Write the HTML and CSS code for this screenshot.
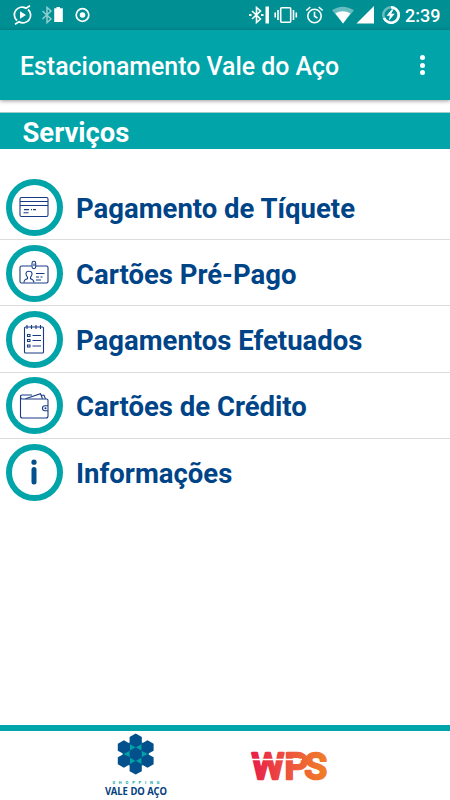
FILE: index.html
```html
<!DOCTYPE html>
<html lang="pt-br">
<head>
    <meta charset="UTF-8">
    <meta name="viewport" content="width=device-width, initial-scale=1.0">
    <title>Estacionamento Vale do Aço</title>
    <link rel="stylesheet" href="styles.css">
</head>
<body>
    <div class="status-bar">
        <svg class="status-icons" width="96" height="30" viewBox="0 0 96 30">
            <g fill="none" stroke="#fff" stroke-width="1.7">
                <path d="M17 20.500A7.600 7.600 0 0 1 26 8.300L30 5.800M28 9.500A7.600 7.600 0 0 1 19 21.700L15 24.200"/>
                <circle cx="82.500" cy="15" r="6.300"/>
            </g>
            <path d="M20 11.200v7.600l6-3.800z" fill="#fff"/>
            <path d="M42.500 11l8.500 8-4 3.500v-15l4 3.500-8.500 8" fill="none" stroke="#8fced0" stroke-width="1.500"/>
            <path d="M56.500 7h3.500v1.300h2.800v13.700h-8.600V8.300h2.300z" fill="#fff"/>
            <circle cx="82.500" cy="15" r="2.800" fill="#fff"/>
        </svg>
        <svg class="status-icons" width="158" height="30" viewBox="245 0 158 30">
            <g fill="none" stroke="#fff" stroke-width="1.6">
                <path d="M252 11l8.500 8-4 3.500v-15l4 3.500-8.500 8"/>
                <path d="M249 15h2.500M261 15h2.500" stroke-width="2"/>
                <rect x="280.700" y="7.800" width="10" height="14.400" rx="1"/>
                <path d="M278 10v10M293.500 10v10M275.200 12.500v5M296.300 12.500v5"/>
                <circle cx="314.500" cy="16" r="6.700"/>
                <path d="M314.500 11.700v4.500l3 2M306.300 10.500l4-3.500M322.700 10.500l-4-3.500"/>
            </g>
            <path d="M265.500 6.500h3.500v17h-3.500z" fill="#fff"/>
            <path d="M332 10.300Q342.500 3 354 10.300L343 23.500z" fill="#66bcbf"/>
            <path d="M335.300 13.300Q342.500 9 350.500 13.300L343 23.500z" fill="#fff"/>
            <path d="M356.500 23.500H374V6z" fill="#fff"/>
            <circle cx="391" cy="15" r="7.700" fill="none" stroke="#66bcbf" stroke-width="2.600"/>
            <path d="M391 7.300a7.700 7.700 0 1 1-7 10.700" fill="none" stroke="#fff" stroke-width="2.600"/>
            <path d="M392 9.300l-5.500 6.500h3.300l-1 5 6-7h-3.600l2.400-4.500z" fill="#fff"/>
        </svg>
        <span class="clock">2:39</span>
    </div>

    <header class="toolbar">
        <h1>Estacionamento Vale do Aço</h1>
        <div class="menu-dots">
            <span></span>
            <span></span>
            <span></span>
        </div>
    </header>

    <main>
        <h2>Serviços</h2>
        <ul class="services">
            <li>
                <span class="circle">
                    <svg class="icon" viewBox="0 0 32 32">
                        <rect x="2" y="6.500" width="28" height="19" rx="1.500"/>
                        <path d="M2 10.500h28M2 14.500h28M6 18.600h5M13 18.600h1M15 18.600h3M5.500 21.700h5"/>
                    </svg>
                </span>
                <span class="label">Pagamento de Tíquete</span>
            </li>
            <li>
                <span class="circle">
                    <svg class="icon" viewBox="0 0 32 32">
                        <path d="M13.500 9H3.500Q2 9 2 10.500v14Q2 26 3.500 26h25q1.500 0 1.500-1.500v-14Q30 9 28.500 9H18"/>
                        <rect x="14" y="4.300" width="3.700" height="7.400" rx="1.850"/>
                        <path d="M16 6.500v2.500"/>
                        <path d="M6 25.500q0-3 3.500-3.700v-1.500C7 17 7.500 14.300 11 14.300s4 2.700 1.500 6v1.500q3 .7 3.500 3.700"/>
                        <path d="M18 16.500h8.500M18 20h3M22.500 20h2M18 23h5"/>
                    </svg>
                </span>
                <span class="label">Cartões Pré-Pago</span>
            </li>
            <li>
                <span class="circle">
                    <svg class="icon" viewBox="0 0 32 32">
                        <rect x="6.500" y="4" width="19" height="26" rx="1"/>
                        <path d="M9 2v4M13.500 2v4M18 2v4M22.500 2v4M14.500 12.500h8.500M14.500 17.500h8.500M14.500 23h8.500"/>
                        <path d="M9.500 11.500h2.500v2h-2.500zM9.500 16.500h2.500v2h-2.500zM9.500 22h2.500v2h-2.500z"/>
                    </svg>
                </span>
                <span class="label">Pagamentos Efetuados</span>
            </li>
            <li>
                <span class="circle">
                    <svg class="icon" viewBox="0 0 32 32">
                        <path d="M2.500 5.500Q2.500 9 4 9h24.500q1.500 0 1.500 1.500v15.500q0 2-2 2H4.500q-2 0-2-2V6Q2.500 5 4 5h10"/>
                        <path d="M7.500 8.700l15-5 2 5M23 5.200h3l1.500 3.500M30 15.700h-3a2.500 2.500 0 0 0 0 5h3"/>
                        <circle cx="27.500" cy="18.200" r=".5"/>
                    </svg>
                </span>
                <span class="label">Cartões de Crédito</span>
            </li>
            <li>
                <span class="circle">
                    <svg class="icon" viewBox="0 0 32 32">
                        <circle class="solid" cx="16" cy="6.200" r="2.600"/>
                        <rect class="solid" x="13.500" y="11" width="5" height="17.500" rx="2.500"/>
                    </svg>
                </span>
                <span class="label">Informações</span>
            </li>
        </ul>
    </main>

    <footer class="logos">
        <svg width="70" height="69" viewBox="101 731 70 69">
            <path d="M129 742.500h13.500l6.700 11.500-6.700 11.500H129l-6.700-11.500z" fill="#00a4a8"/>
            <defs><path id="hex" d="M0-6.900l6.100 3.450v6.900L0 6.900l-6.100-3.450v-6.900z"/></defs>
            <g fill="#04508c">
                <use href="#hex" x="135.700" y="740.500"/>
                <use href="#hex" x="123.900" y="747.200"/>
                <use href="#hex" x="147.500" y="747.200"/>
                <use href="#hex" x="135.700" y="754.100"/>
                <use href="#hex" x="123.900" y="760.800"/>
                <use href="#hex" x="147.500" y="760.800"/>
                <use href="#hex" x="135.700" y="767.700"/>
            </g>
            <text class="logo-small" x="112.500" y="783.800" textLength="47">SHOPPING</text>
            <text class="logo-name" x="105" y="795" textLength="62" lengthAdjust="spacingAndGlyphs">VALE DO AÇO</text>
        </svg>
        <svg width="84" height="69" viewBox="248 731 84 69">
            <defs>
                <linearGradient id="warm" gradientUnits="userSpaceOnUse" x1="250" y1="0" x2="329" y2="0">
                    <stop offset="0" stop-color="#e71d4b"/>
                    <stop offset=".55" stop-color="#ee5a3b"/>
                    <stop offset="1" stop-color="#f08025"/>
                </linearGradient>
            </defs>
            <text class="logo-wps" x="251.500 284.500 304.500" y="779">WPS</text>
            <path d="M248 759.500h54" stroke="#fff" stroke-width="1.600"/>
        </svg>
    </footer>
</body>
</html>
```

FILE: styles.css
```css
* {
    margin: 0;
    padding: 0;
    box-sizing: border-box;
}
body {
    font-family: Roboto, "Liberation Sans", sans-serif;
    display: flex;
    flex-direction: column;
    height: 800px;
    background-color: #fff;
    overflow: hidden;
}

.status-bar {
    display: flex;
    align-items: center;
    height: 30px;
    background-color: #008f93;
    color: #fff;
}
.status-icons {
    flex: none;
}
.status-icons + .status-icons {
    margin-left: auto;
}
.clock {
    width: 47px;
    padding: 1px 0 0 2px;
    font-size: 18px;
    font-weight: 500;
    line-height: 30px;
}

.toolbar {
    display: flex;
    align-items: center;
    justify-content: space-between;
    height: 70px;
    padding: 2px 25px 0 20px;
    background-color: #00a4a9;
    box-shadow: 0 1px 4px rgba(0, 0, 0, 0.4);
    color: #fff;
}
.toolbar h1 {
    font-size: 24.9px;
    font-weight: 500;
    white-space: nowrap;
}
.menu-dots {
    display: flex;
    flex-direction: column;
    gap: 2.5px;
    padding-bottom: 2px;
}
.menu-dots span {
    width: 5px;
    height: 5px;
    border-radius: 50%;
    background-color: #fff;
}

main {
    flex: 1;
    padding-top: 12px;
}
h2 {
    height: 37px;
    padding-left: 22.5px;
    border-top: 1px solid #a5cccd;
    background-color: #00a4a9;
    color: #fff;
    font-size: 27.4px;
    font-weight: 700;
    line-height: 40px;
}

/* Lista de serviços */
.services {
    list-style: none;
    padding-top: 25px;
}
.services li {
    display: flex;
    align-items: center;
    gap: 13.5px;
    height: 66.2px;
    padding: 1px 0 0 5.5px;
    border-bottom: 1px solid #dcdcdc;
}
.services li:last-child {
    border-bottom: none;
}
.circle {
    display: flex;
    align-items: center;
    justify-content: center;
    width: 57px;
    height: 57px;
    border: 6px solid #00a4a9;
    border-radius: 50%;
}
.icon {
    width: 32px;
    height: 32px;
    fill: none;
    stroke: #173b83;
    stroke-width: 1.1;
}
.icon .solid {
    fill: #04508c;
    stroke: none;
}
.label {
    color: #004488;
    font-size: 27.5px;
    font-weight: 700;
    line-height: 32px;
    padding-top: 3px;
    white-space: nowrap;
}

.logos {
    display: flex;
    gap: 77px;
    height: 75px;
    padding-left: 101px;
    border-top: 6px solid #00a4a9;
}
.logos svg {
    overflow: visible;
}
.logo-small {
    fill: #00a4a8;
    font-size: 4px;
    font-weight: 700;
}
.logo-name {
    fill: #063f7d;
    font-family: "Noto Sans", sans-serif;
    font-size: 10.5px;
    font-weight: 700;
}
.logo-wps {
    fill: url(#warm);
    stroke: url(#warm);
    stroke-width: 2.6;
    stroke-linejoin: round;
    font-size: 37px;
    font-weight: 500;
}
```
